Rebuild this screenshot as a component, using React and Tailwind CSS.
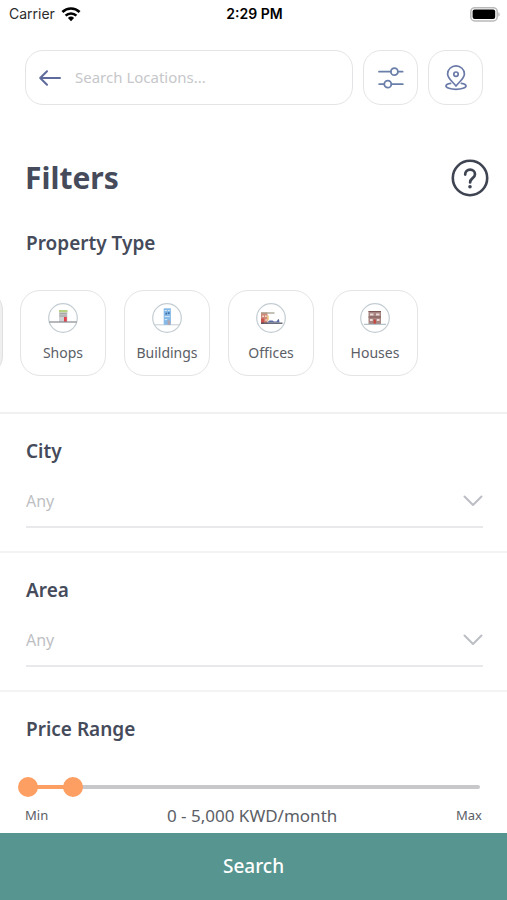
import { useState } from "react";

function WifiIcon() {
  return (
    <svg width="20" height="15" viewBox="0 0 20 15" aria-hidden="true">
      <g fill="none" stroke="#000" strokeWidth="2.6">
        <path d="M1.4 5a12.4 12.4 0 0 1 17.2 0" />
        <path d="M4.6 8.6a7.8 7.8 0 0 1 10.8 0" />
      </g>
      <path d="M6.9 10.9a4.5 4.5 0 0 1 6.2 0L10 14.2z" />
    </svg>
  );
}

function BatteryIcon() {
  return (
    <svg width="30" height="15" viewBox="0 0 30 15" aria-hidden="true">
      <rect x="0.8" y="0.7" width="26.4" height="13.2" rx="4" fill="#fff" stroke="#b9b9b9" strokeWidth="1.5" />
      <rect x="2.6" y="2.6" width="22.6" height="9.4" rx="2" />
      <path d="M28.4 5.2c1.6.6 1.6 3.8 0 4.4z" fill="#b0b0b0" />
    </svg>
  );
}

function BackIcon() {
  return (
    <svg width="22" height="16" viewBox="0 0 22 16" fill="none" stroke="#5f6b9c" strokeWidth="2" strokeLinecap="round" strokeLinejoin="round" aria-hidden="true">
      <path d="M21 8H1.2M8 1.2L1.2 8L8 14.8" />
    </svg>
  );
}

function SlidersIcon() {
  return (
    <svg width="26" height="22" viewBox="0 0 26 22" fill="none" stroke="#6a7fa9" strokeWidth="1.8" strokeLinecap="round" aria-hidden="true">
      <path d="M1 4.7h11.8M20 4.7h4.6M1.2 17.2h4.9M13.4 17.2h11.4" />
      <circle cx="16.4" cy="4.7" r="3.5" />
      <circle cx="9.8" cy="17.2" r="3.5" />
    </svg>
  );
}

function PinIcon() {
  return (
    <svg width="22" height="26" viewBox="0 0 22 26" fill="none" stroke="#6a7aa8" strokeWidth="1.7" strokeLinecap="round" strokeLinejoin="round" aria-hidden="true">
      <path d="M11 21C7.6 16.6 2.6 13.4 2.6 8.9a8.4 8 0 0 1 16.8 0C19.4 13.4 14.4 16.6 11 21z" />
      <circle cx="11" cy="9.2" r="2.2" />
      <path d="M5.6 18.4c-2.8.5-4.6 1.4-4.6 2.5 0 1.900 4.500 3.400 10 3.400s10-1.500 10-3.400c0-1.100-1.800-2-4.600-2.500" />
    </svg>
  );
}

function HelpIcon() {
  return (
    <svg width="38" height="38" viewBox="0 0 38 38" fill="none" stroke="#3f4452" aria-hidden="true">
      <circle cx="19" cy="19" r="17.2" strokeWidth="2.6" />
      <path d="M14.2 15.6c0-3 2.1-4.9 4.9-4.9s4.9 1.9 4.9 4.5c0 4-4.9 3.9-4.9 8.2" strokeWidth="2.7" strokeLinecap="round" />
      <circle cx="19" cy="27.8" r="1.8" fill="#3f4452" stroke="none" />
    </svg>
  );
}

function ChevronIcon() {
  return (
    <svg className="pointer-events-none col-start-1 row-start-1 self-center justify-self-end" width="20" height="12" viewBox="0 0 20 12" fill="none" stroke="#bcbec5" strokeWidth="2" strokeLinecap="round" strokeLinejoin="round" aria-hidden="true">
      <path d="M1.5 1.5L10 10L18.5 1.5" />
    </svg>
  );
}

function Badge({ children }) {
  return (
    <svg width="30" height="30" viewBox="0 0 30 30" aria-hidden="true">
      <circle cx="15" cy="15" r="14.3" fill="#fff" stroke="#c3cdd2" strokeWidth="1.2" />
      {children}
    </svg>
  );
}

function ShopsArt() {
  return (
    <Badge>
      <rect x="11" y="7" width="8.4" height="12" fill="#cfd1d4" />
      <rect x="11" y="7" width="8.4" height="2.2" fill="#b9cf83" />
      <path d="M11.5 10.8h7.4M11.5 13h7.4" stroke="#94908f" strokeWidth="0.9" />
      <rect x="16" y="14" width="2.8" height="5" fill="#e4434b" />
      <path d="M1.2 19h27.6" stroke="#87898f" strokeWidth="1.2" />
    </Badge>
  );
}

function BuildingsArt() {
  return (
    <Badge>
      <path d="M3 21.8h24" stroke="#c3ccd1" strokeWidth="1" />
      <rect x="11.7" y="5.3" width="7.2" height="16.5" fill="#86b9e6" />
      <path d="M12.7 7.5h2.2M16 7.5h1.8M12.7 13.6h5.2M12.7 16.6h2.6" stroke="#d3e7f7" strokeWidth="1" />
      <path d="M13.5 10.7h1.5M15.8 10.2h1.8" stroke="#3c6da6" strokeWidth="1.7" />
      <rect x="15.6" y="17.5" width="2.6" height="4.3" fill="#b3a3ac" />
    </Badge>
  );
}

function OfficesArt() {
  return (
    <Badge>
      <rect x="5" y="9.5" width="6.5" height="11" fill="#d08a78" />
      <path d="M5 10h13.5" stroke="#a3a08f" strokeWidth="1.3" />
      <path d="M6.3 13.2h1.7M9 13.2h1.7M9.4 17h1.5" stroke="#f1dcd4" strokeWidth="1.5" />
      <rect x="5" y="15.5" width="3.2" height="5" fill="#c9564e" />
      <path d="M12 12.5v5" stroke="#e9b95f" strokeWidth="1.2" />
      <path d="M11 19.5l2.5-2h3l1.5 1h2.5l1.5-2.3h1l.5 3.3z" fill="#5d6ea3" />
      <path d="M5 20.2h21.5" stroke="#454a5c" strokeWidth="1.2" />
    </Badge>
  );
}

function HousesArt() {
  return (
    <Badge>
      <rect x="8.5" y="8" width="12.5" height="13" fill="#a88580" />
      <path d="M10 11.5h3.5M16 11.5h3.5M10 17h2.7M16.8 17h2.7" stroke="#ead9d6" strokeWidth="1.8" />
      <path d="M8.5 8.5h12.5M8.5 14h12.5" stroke="#7b5855" strokeWidth="1" />
      <rect x="13.6" y="16.5" width="2.2" height="4.5" fill="#c2463d" />
      <path d="M4 21.3h22" stroke="#a3b5bc" strokeWidth="1" />
    </Badge>
  );
}

const propertyTypes = [
  { name: "Shops", Art: ShopsArt },
  { name: "Buildings", Art: BuildingsArt },
  { name: "Offices", Art: OfficesArt },
  { name: "Houses", Art: HousesArt },
];

function SelectField({ id, label }) {
  return (
    <section className="h-[139px] border-b-2 border-[#f3f3f4] pt-[23px] pr-6 pl-[26px]">
      <label htmlFor={id} className="block text-[19px] leading-7 font-semibold text-[#454b5a]">
        {label}
      </label>
      <div className="mt-2.5 grid h-[53px] border-b-2 border-[#e9e9eb]">
        <select id={id} defaultValue="any" className="col-start-1 row-start-1 w-full appearance-none bg-transparent text-base text-[#bebfc3] outline-none">
          <option value="any">Any</option>
        </select>
        <ChevronIcon />
      </div>
    </section>
  );
}

const rangeClass =
  "pointer-events-none col-start-1 row-start-1 h-5 w-full appearance-none bg-transparent outline-none [&::-webkit-slider-thumb]:pointer-events-auto [&::-webkit-slider-thumb]:size-5 [&::-webkit-slider-thumb]:appearance-none [&::-webkit-slider-thumb]:rounded-full [&::-webkit-slider-thumb]:bg-[#fd9e63]";

const PRICE_LIMIT = 50000;

export default function App() {
  const [low, setLow] = useState(0);
  const [high, setHigh] = useState(5000);

  return (
    <div className="flex min-h-screen flex-col overflow-x-clip bg-white font-['Noto_Sans',sans-serif]">
      <div className="grid h-7 grid-cols-3 items-center pr-[7px] pl-[9px] font-['Inter',sans-serif] text-sm text-black">
        <span className="flex items-center gap-1.5 text-[#2c2c2c]">
          Carrier <WifiIcon />
        </span>
        <span className="text-center font-semibold">2:29 PM</span>
        <span className="justify-self-end">
          <BatteryIcon />
        </span>
      </div>

      <header className="mt-[22px] flex gap-2.5 pr-6 pl-[25px]">
        <div className="flex h-[55px] min-w-0 flex-1 items-center gap-3.5 rounded-[18px] border border-[#e4e4e7] pr-4 pl-[13px]">
          <button type="button" aria-label="Back">
            <BackIcon />
          </button>
          <input type="text" aria-label="Search Locations" placeholder="Search Locations..." className="min-w-0 flex-1 bg-transparent text-[15px] text-[#454b5a] outline-none placeholder:text-[#c6c7ca]" />
        </div>
        <button type="button" aria-label="Filter options" className="flex size-[55px] items-center justify-center rounded-[18px] border border-[#e4e4e7]">
          <SlidersIcon />
        </button>
        <button type="button" aria-label="Map" className="flex size-[55px] items-center justify-center rounded-[18px] border border-[#e4e4e7]">
          <PinIcon />
        </button>
      </header>

      <div className="mt-[54px] flex items-center justify-between pr-[18px] pl-[25px]">
        <h1 className="text-[30px] leading-[38px] font-bold text-[#454b5a]">Filters</h1>
        <button type="button" aria-label="Help">
          <HelpIcon />
        </button>
      </div>

      <section className="border-b-2 border-[#f0f0f1] pt-8 pb-9">
        <h2 className="pr-6 pl-[26px] text-[19px] leading-7 font-semibold text-[#454b5a]">Property Type</h2>
        <div className="mt-[33px] -ml-[83px] flex gap-[17px]">
          <button type="button" aria-label="Previous property type" className="h-[86px] w-[86px] shrink-0 rounded-[20px] border border-[#e0e0e2] bg-[#efeff0]" />
          <div className="flex gap-[18px]">
            {propertyTypes.map(({ name, Art }) => (
              <button key={name} type="button" className="flex h-[86px] w-[86px] shrink-0 flex-col items-center rounded-[20px] border border-[#e4e4e7] pt-3 text-sm text-[#5b5e66]">
                <Art />
                <span className="mt-2.5">{name}</span>
              </button>
            ))}
          </div>
        </div>
      </section>

      <SelectField id="city" label="City" />
      <SelectField id="area" label="Area" />

      <section className="pt-[23px]">
        <h2 className="pr-6 pl-[26px] text-[19px] leading-7 font-semibold text-[#454b5a]">Price Range</h2>
        <div className="mt-[34px] grid items-center pr-[17px] pl-[18px]">
          <div className="col-start-1 row-start-1 mx-2.5 h-1 rounded-full bg-[#c8c8ca]">
            <div
              className="h-1 bg-[#fd9e63]"
              style={{
                marginLeft: `${(low / PRICE_LIMIT) * 100}%`,
                width: `${((high - low) / PRICE_LIMIT) * 100}%`,
              }}
            />
          </div>
          <input type="range" aria-label="Minimum price" min="0" max={PRICE_LIMIT} step="500" value={low} onChange={(e) => setLow(Math.min(Number(e.target.value), high))} className={rangeClass} />
          <input type="range" aria-label="Maximum price" min="0" max={PRICE_LIMIT} step="500" value={high} onChange={(e) => setHigh(Math.max(Number(e.target.value), low))} className={rangeClass} />
        </div>
        <div className="mt-[7px] flex items-center justify-between px-[25px] pb-[3px] text-[#5b5e66]">
          <span className="text-[13px]">Min</span>
          <span className="text-[17px] leading-6">
            {low.toLocaleString("en-US")} - {high.toLocaleString("en-US")} KWD/month
          </span>
          <span className="text-[13px]">Max</span>
        </div>
      </section>

      <button type="button" className="sticky bottom-0 mt-auto h-[67px] w-full shrink-0 bg-[#579590] text-[19px] font-medium text-white">
        Search
      </button>
    </div>
  );
}
